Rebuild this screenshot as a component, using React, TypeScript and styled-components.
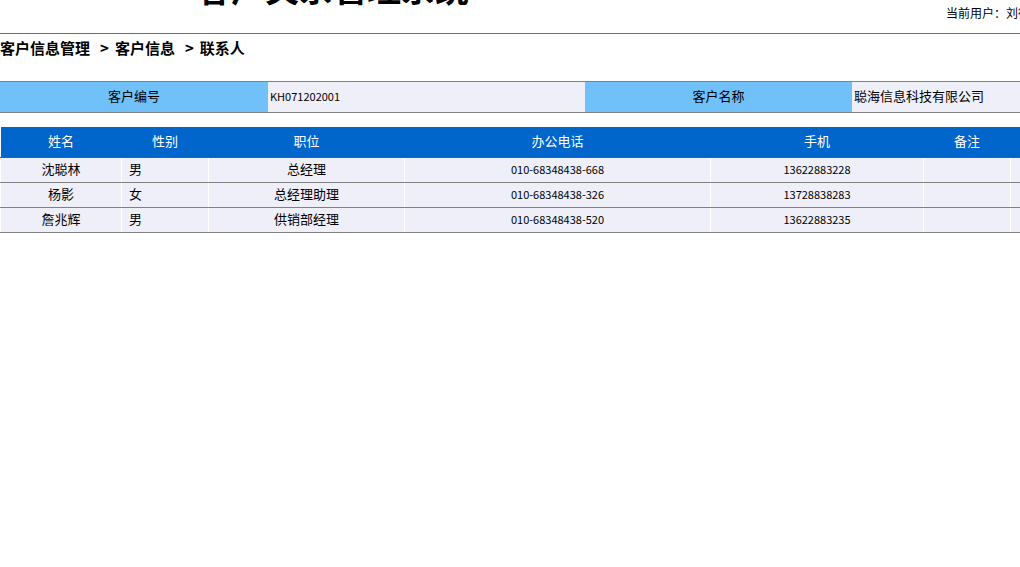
import React from "react";
import styled, { createGlobalStyle } from "styled-components";

const GlobalStyle = createGlobalStyle`
  html, body {
    margin: 0;
    padding: 0;
    overflow: hidden;
    background: #fff;
  }
  body {
    font-family: "Noto Sans CJK SC", "Liberation Sans", sans-serif;
    color: #000;
  }
`;

const Page = styled.div`
  width: 1100px;
`;

const TopBar = styled.header`
  display: grid;
  grid-template-columns: 946px auto;
  height: 33px;
  border-bottom: 1px solid #6b6b6b;
  overflow: hidden;
`;

const Title = styled.h1`
  margin: -29px 0 0;
  padding-left: 197px;
  font-size: 34px;
  line-height: 34px;
  font-weight: bold;
  white-space: nowrap;
`;

const UserInfo = styled.div`
  margin-top: 5px;
  font-size: 12px;
  line-height: 16px;
  white-space: nowrap;
`;

const Breadcrumb = styled.div`
  margin-top: 4px;
  font-size: 15px;
  font-weight: bold;
  line-height: 20px;
  white-space: nowrap;
`;

const Arrow = styled.span`
  margin: 0 6px 0 10px;
`;

const InfoTable = styled.div`
  display: grid;
  grid-template-columns: 268px 317px 267px 1fr;
  margin-top: 23px;
  height: 30px;
  border-top: 1px solid #808080;
  border-bottom: 1px solid #808080;
`;

const InfoLabel = styled.div`
  display: flex;
  align-items: center;
  justify-content: center;
  padding-bottom: 3px;
  background: #70c0fa;
  font-size: 13px;
`;

const InfoValue = styled.div<{ $num?: boolean }>`
  display: flex;
  align-items: center;
  padding: 0 0 3px 2px;
  background: #efeff9;
  font-size: ${p => (p.$num ? "11px" : "13px")};
`;

const ContactTable = styled.table`
  margin-top: 14px;
  width: 1100px;
  border-collapse: collapse;
  table-layout: fixed;
`;

const HeadCell = styled.th`
  height: 27px;
  padding: 0 0 3px;
  background: #0066cc;
  color: #fff;
  font-size: 13px;
  font-weight: normal;
  line-height: 18px;
  text-align: center;
  border-bottom: 1px solid #4a5a70;
`;

const Cell = styled.td<{ $left?: boolean; $num?: boolean }>`
  height: 22px;
  padding: 0 0 2px ${p => (p.$left ? "7px" : "0")};
  background: #efeff9;
  font-size: ${p => (p.$num ? "11px" : "13px")};
  line-height: 18px;
  text-align: ${p => (p.$left ? "left" : "center")};
  border-left: 1px solid #fff;
  border-right: 1px solid #fff;
  border-bottom: 1px solid #808080;
  white-space: nowrap;
`;

const columns = [
  { title: "姓名", width: 121 },
  { title: "性别", width: 87 },
  { title: "职位", width: 196 },
  { title: "办公电话", width: 306 },
  { title: "手机", width: 213 },
  { title: "备注", width: 87 },
  { title: "", width: 90 }
];

const contacts = [
  { name: "沈聪林", sex: "男", job: "总经理", tel: "010-68348438-668", mobile: "13622883228" },
  { name: "杨影", sex: "女", job: "总经理助理", tel: "010-68348438-326", mobile: "13728838283" },
  { name: "詹兆辉", sex: "男", job: "供销部经理", tel: "010-68348438-520", mobile: "13622883235" }
];

const App: React.FC = () => (
  <Page>
    <GlobalStyle />
    <TopBar>
      <Title>客户关系管理系统</Title>
      <UserInfo>当前用户：刘德华</UserInfo>
    </TopBar>
    <Breadcrumb>
      客户信息管理<Arrow>&gt;</Arrow>客户信息<Arrow>&gt;</Arrow>联系人
    </Breadcrumb>
    <InfoTable>
      <InfoLabel>客户编号</InfoLabel>
      <InfoValue $num>KH071202001</InfoValue>
      <InfoLabel>客户名称</InfoLabel>
      <InfoValue>聪海信息科技有限公司</InfoValue>
    </InfoTable>
    <ContactTable>
      <colgroup>
        {columns.map(({ width }, i) => (
          <col key={i} style={{ width }} />
        ))}
      </colgroup>
      <thead>
        <tr>
          {columns.map(({ title }, i) => (
            <HeadCell key={i}>{title}</HeadCell>
          ))}
        </tr>
      </thead>
      <tbody>
        {contacts.map(({ name, sex, job, tel, mobile }) => (
          <tr key={name}>
            <Cell>{name}</Cell>
            <Cell $left>{sex}</Cell>
            <Cell>{job}</Cell>
            <Cell $num>{tel}</Cell>
            <Cell $num>{mobile}</Cell>
            <Cell />
            <Cell />
          </tr>
        ))}
      </tbody>
    </ContactTable>
  </Page>
);

export default App;
